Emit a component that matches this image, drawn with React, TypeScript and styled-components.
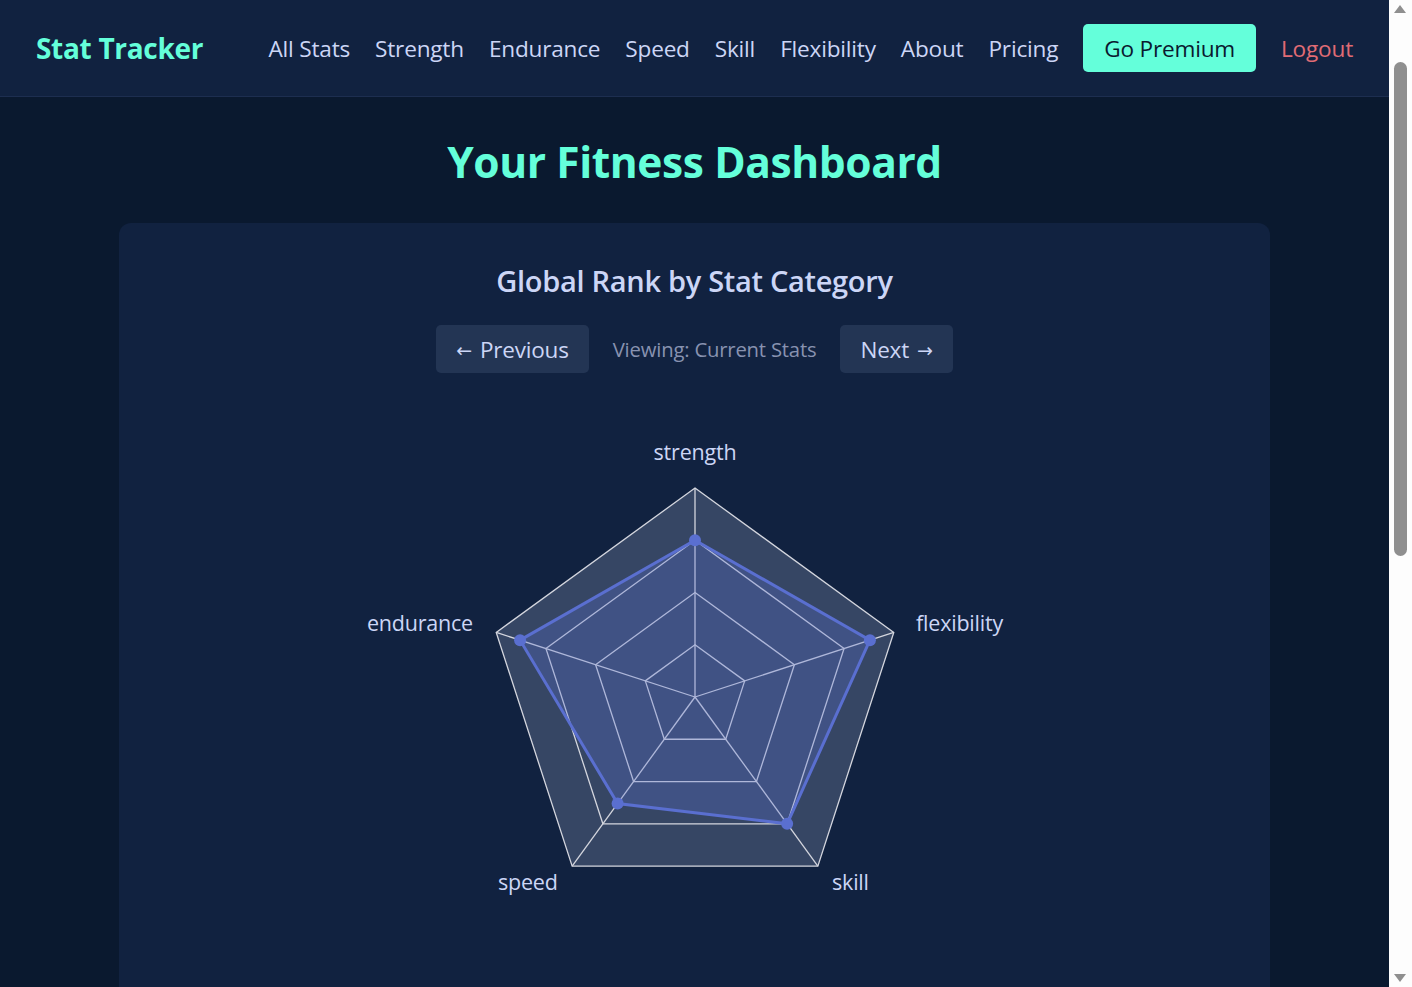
import React from 'react';
import styled, {createGlobalStyle} from 'styled-components';

const GlobalStyle = createGlobalStyle`
  * { box-sizing: border-box; }
  html, body {
    margin: 0;
    padding: 0;
    background: #0a192f;
    font-family: "Open Sans", "Noto Sans", sans-serif;
  }
`;

const Page = styled.div`
  margin-right: 23px;
`;

/* the browser scrollbar seen in the screenshot */
const ScrollTrack = styled.div`
  position: fixed;
  top: 0;
  right: 0;
  bottom: 0;
  width: 23px;
  background: #fdfdfd;
`;

const ScrollThumb = styled.div`
  position: absolute;
  left: 5px;
  width: 13px;
  top: 62px;
  height: 494px;
  border-radius: 7px;
  background: #8f8f8f;
`;

const ScrollArrow = styled.div<{ $down?: boolean }>`
  position: absolute;
  left: 5px;
  width: 0;
  height: 0;
  border-left: 6.5px solid transparent;
  border-right: 6.5px solid transparent;
  ${p => p.$down
    ? 'bottom: 5px; border-top: 8px solid #8f8f8f;'
    : 'top: 5px; border-bottom: 8px solid #8f8f8f;'}
`;

const NavBar = styled.nav`
  height: 97px;
  background: #112240;
  border-bottom: 1px solid #1d2e50;
  display: flex;
  align-items: center;
  padding: 0 36px;
`;

const Brand = styled.div`
  color: #64ffda;
  font-size: 28px;
  font-weight: 700;
  letter-spacing: -0.3px;
  margin-right: auto;
`;

const NavLinks = styled.ul`
  display: flex;
  align-items: center;
  gap: 25px;
  margin: 0;
  padding: 0;
  list-style: none;
`;

const NavLink = styled.li<{ $tone?: 'logout' }>`
  font-size: 22.6px;
  color: ${p => p.$tone === 'logout' ? '#e06c75' : '#ccd6f6'};
  letter-spacing: -0.2px;
  white-space: nowrap;
`;

const PremiumButton = styled.button`
  height: 48px;
  padding: 0 21px;
  background: #64ffda;
  color: #0a192f;
  border: none;
  border-radius: 5px;
  font-family: inherit;
  font-size: 22.6px;
  letter-spacing: -0.2px;
`;

const Main = styled.main`
  padding: 0 119px 40px;
`;

const PageTitle = styled.h1`
  margin: 0;
  padding: 37px 0 33px;
  text-align: center;
  color: #64ffda;
  font-size: 42.5px;
  font-weight: 700;
  letter-spacing: -0.4px;
  line-height: 56px;
`;

const Card = styled.section`
  background: #112240;
  border-radius: 12px;
  padding: 38px 40px 40px;
  min-height: 1620px;
  display: flex;
  flex-direction: column;
  align-items: center;
`;

const CardTitle = styled.h2`
  margin: 0;
  color: #ccd6f6;
  font-size: 29px;
  font-weight: 600;
  letter-spacing: -0.3px;
  line-height: 40px;
`;

const Controls = styled.div`
  display: flex;
  align-items: center;
  gap: 24px;
  margin-top: 24px;
`;

const PageButton = styled.button`
  height: 48px;
  padding: 0 20px;
  background: #233554;
  color: #ccd6f6;
  border: none;
  border-radius: 5px;
  font-family: inherit;
  font-size: 22.5px;
  letter-spacing: -0.2px;
  display: flex;
  align-items: center;
  gap: 8px;
`;

const Arrow = styled.span`
  font-family: "DejaVu Sans", sans-serif;
  font-size: 19px;
  position: relative;
  top: 1px;
`;

const Viewing = styled.span`
  color: #8892b0;
  font-size: 20.3px;
  letter-spacing: -0.2px;
`;

const ChartBox = styled.div`
  margin-top: 20px;
  width: 800px;
  height: 560px;
`;

const stats = [
  {key: 'strength', value: 0.75, lx: 0, ly: -237, anchor: 'middle'},
  {key: 'flexibility', value: 0.88, lx: 221, ly: -66, anchor: 'start'},
  {key: 'skill', value: 0.75, lx: 137, ly: 193, anchor: 'start'},
  {key: 'speed', value: 0.63, lx: -197, ly: 193, anchor: 'start'},
  {key: 'endurance', value: 0.88, lx: -222, ly: -66, anchor: 'end'},
];

const CX = 400;
const CY = 304;
const R = 209;

function point(i: number, r: number) {
  const a = -Math.PI / 2 + (i * 2 * Math.PI) / 5;
  return [CX + r * Math.cos(a), CY + r * Math.sin(a)];
}

function ring(r: number) {
  return stats.map((_, i) => point(i, r).join(',')).join(' ');
}

function RadarChart() {
  const dataPoints = stats.map((s, i) => point(i, R * s.value));
  return (
    <ChartBox>
      <svg width="800" height="560" viewBox="0 0 800 560">
        <polygon points={ring(R)} fill="#ccd6f6" fillOpacity={0.2}/>
        {[1, 2, 3, 4].map(n => (
          <polygon key={n} points={ring((R * n) / 4)} fill="none" stroke="#d4d6de" strokeWidth={1.3}/>
        ))}
        {stats.map((s, i) => {
          const [x, y] = point(i, R);
          return <line key={s.key} x1={CX} y1={CY} x2={x} y2={y} stroke="#d4d6de" strokeWidth={1.3}/>;
        })}
        <polygon
          points={dataPoints.map(p => p.join(',')).join(' ')}
          fill="#5a6fd0"
          fillOpacity={0.3}
          stroke="#5a6fd0"
          strokeWidth={3}
        />
        {dataPoints.map(([x, y], i) => (
          <circle key={i} cx={x} cy={y} r={6} fill="#5a6fd0"/>
        ))}
        {stats.map(s => (
          <text
            key={s.key}
            x={CX + s.lx}
            y={CY + s.ly}
            textAnchor={s.anchor as 'middle' | 'start' | 'end'}
            fill="#ccd6f6"
            fontSize={21.5}
            fontFamily='"Open Sans", sans-serif'
            letterSpacing="-0.2"
          >
            {s.key}
          </text>
        ))}
      </svg>
    </ChartBox>
  );
}

function App() {
  return (
    <>
      <GlobalStyle/>
      <Page>
        <NavBar>
          <Brand>Stat Tracker</Brand>
          <NavLinks>
            <NavLink>All Stats</NavLink>
            <NavLink>Strength</NavLink>
            <NavLink>Endurance</NavLink>
            <NavLink>Speed</NavLink>
            <NavLink>Skill</NavLink>
            <NavLink>Flexibility</NavLink>
            <NavLink>About</NavLink>
            <NavLink>Pricing</NavLink>
            <li><PremiumButton>Go Premium</PremiumButton></li>
            <NavLink $tone="logout">Logout</NavLink>
          </NavLinks>
        </NavBar>
        <Main>
          <PageTitle>Your Fitness Dashboard</PageTitle>
          <Card>
            <CardTitle>Global Rank by Stat Category</CardTitle>
            <Controls>
              <PageButton><Arrow>←</Arrow>Previous</PageButton>
              <Viewing>Viewing: Current Stats</Viewing>
              <PageButton>Next<Arrow>→</Arrow></PageButton>
            </Controls>
            <RadarChart/>
          </Card>
        </Main>
      </Page>
      <ScrollTrack>
        <ScrollArrow/>
        <ScrollThumb/>
        <ScrollArrow $down/>
      </ScrollTrack>
    </>
  );
}

export default App;
